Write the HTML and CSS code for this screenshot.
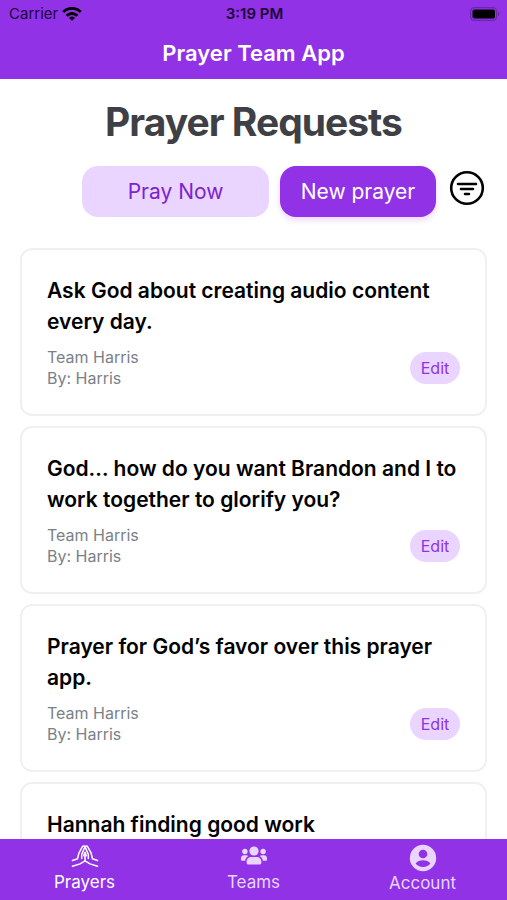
FILE: index.html
```html
<!DOCTYPE html>
<html lang="en">
<head>
  <meta charset="utf-8">
  <meta name="viewport" content="width=device-width, initial-scale=1">
  <title>Prayer Team App</title>
  <link rel="stylesheet" href="styles.css">
</head>
<body>
  <header>
    <div class="status-bar">
      <div class="carrier">
        <span>Carrier</span>
        <svg width="20" height="14" viewBox="0 0 20 14" fill="none" stroke="currentColor" stroke-width="2.9">
          <path d="M1.2 5a12.4 12.4 0 0 1 17.6 0"/>
          <path d="M4.600 8.700a7.600 7.600 0 0 1 10.800 0"/>
          <path d="M10 13.8l-3-3a4.200 4.200 0 0 1 6 0z" fill="currentColor" stroke="none"/>
        </svg>
      </div>
      <span class="time">3:19 PM</span>
      <div class="battery">
        <svg width="30" height="14" viewBox="0 0 30 14">
          <rect x=".6" y=".6" width="26" height="12.8" rx="4" fill="none" stroke="#6a27a8" stroke-width="1.2"/>
          <rect x="2.500" y="2.500" width="22.500" height="9" rx="2" fill="#000"/>
          <path d="M28 4.800q1.600.8 1.600 2.200T28 9.200z" fill="#6a27a8"/>
        </svg>
      </div>
    </div>
    <p class="app-title">Prayer Team App</p>
  </header>

  <main>
    <h1>Prayer Requests</h1>
    <div class="actions">
      <button class="btn btn-light">Pray Now</button>
      <button class="btn btn-dark">New prayer</button>
      <button class="filter" aria-label="Filter">
        <svg width="36" height="36" viewBox="0 0 36 36" fill="none" stroke="#000" stroke-width="2.6" stroke-linecap="round">
          <circle cx="18" cy="18" r="15.8"/>
          <path d="M9 14h18M12 19h12M16 24h4"/>
        </svg>
      </button>
    </div>

    <div class="cards">
      <article class="card">
        <h2>Ask God about creating audio content every day.</h2>
        <div class="card-info">
          <p>Team Harris<br>By: Harris</p>
          <button class="edit">Edit</button>
        </div>
      </article>
      <article class="card">
        <h2>God… how do you want Brandon and I to work together to glorify you?</h2>
        <div class="card-info">
          <p>Team Harris<br>By: Harris</p>
          <button class="edit">Edit</button>
        </div>
      </article>
      <article class="card">
        <h2>Prayer for God’s favor over this prayer app.</h2>
        <div class="card-info">
          <p>Team Harris<br>By: Harris</p>
          <button class="edit">Edit</button>
        </div>
      </article>
      <article class="card">
        <h2>Hannah finding good work</h2>
      </article>
    </div>
  </main>

  <nav>
    <a href="#prayers" class="active">
      <svg width="28" height="24" viewBox="0 0 28 24" fill="none" stroke="currentColor" stroke-width="1.5" stroke-linecap="round" stroke-linejoin="round">
        <path d="M1.500 16.500l5-1.700 1.500-6 3.300-6q1.200-1.600 2.700-.2 1.500-1.400 2.700.2l3.300 6 1.500 6 5 1.700"/>
        <path d="M1.500 22.200l7.500-2.300 5-3 5 3 7.500 2.300"/>
        <path d="M14 2.800l-3.300 7.600v4.200M14 2.800l3.300 7.600v4.200"/>
        <path d="M14 16.600v-4.400M12.700 11.500L14 8.300l1.300 3.200q-1.300 1.400-2.600 0z"/>
      </svg>
      <span>Prayers</span>
    </a>
    <a href="#teams">
      <svg width="28" height="24" viewBox="0 0 28 24" fill="currentColor">
        <circle cx="14" cy="7" r="4.600"/>
        <circle cx="4.900" cy="7.500" r="2.700"/>
        <circle cx="23.100" cy="7.500" r="2.700"/>
        <path d="M6.600 18.200c0-3.400 2.100-5.200 4.800-5.200h5.200c2.700 0 4.800 1.800 4.800 5.200 0 1.600-.8 2.300-2 2.300H8.600c-1.200 0-2-.7-2-2.300z"/>
        <path d="M1 14.200C1 12.300 2.300 11.300 4 11.300h2c1 0 1.600.3 2.200.8-1.800 1.100-2.800 2.500-3 4.600H2.300C1.500 16.700 1 16.200 1 15.400z"/>
        <path d="M27 14.200c0-1.900-1.300-2.900-3-2.900h-2c-1 0-1.600.3-2.200.8 1.800 1.100 2.800 2.500 3 4.600h2.900c.8 0 1.300-.5 1.300-1.300z"/>
      </svg>
      <span>Teams</span>
    </a>
    <a href="#account">
      <svg width="28" height="28" viewBox="0 0 28 28">
        <circle cx="14" cy="14" r="13.200" fill="currentColor"/>
        <circle cx="14" cy="10" r="4.300" fill="#9132e7"/>
        <path d="M6.600 19.500c1.600-2.400 4.300-3.300 7.400-3.300s5.800.9 7.400 3.300c-1.700 2.200-4.300 3.500-7.400 3.500s-5.700-1.300-7.400-3.500z" fill="#9132e7"/>
      </svg>
      <span>Account</span>
    </a>
  </nav>
</body>
</html>
```
FILE: styles.css
```css
* {
  box-sizing: border-box;
}
html, body {
  height: 100%;
}
body {
  margin: 0;
  display: flex;
  flex-direction: column;
  font-family: Inter, "Liberation Sans", sans-serif;
  background: #fff;
  color: #000;
}
h1, h2, p {
  margin: 0;
}
button {
  border: none;
  padding: 0;
  font-family: inherit;
  cursor: pointer;
}

/* header */
header {
  flex: none;
  background: #9132e7;
  padding-bottom: 10px;
}
.status-bar {
  display: grid;
  grid-template-columns: 1fr auto 1fr;
  align-items: center;
  height: 27px;
  padding: 0 7px 0 9px;
  font-size: 15px;
  color: #1d0636;
}
.carrier {
  display: flex;
  align-items: center;
  gap: 4px;
}
.carrier svg {
  color: #000;
}
.time {
  font-weight: 600;
}
.battery {
  display: flex;
  justify-content: flex-end;
}
.app-title {
  padding-top: 10px;
  font-size: 22px;
  line-height: 32px;
  font-weight: 600;
  text-align: center;
  color: #fff;
}

/* content */
main {
  flex: 1;
  min-height: 0;
  overflow: hidden;
  padding: 19px 20px 0;
}
h1 {
  font-size: 39px;
  line-height: 48px;
  text-align: center;
  letter-spacing: -1px;
  color: #3f3f46;
}
.actions {
  display: flex;
  justify-content: flex-end;
  align-items: center;
  gap: 11px;
  margin-top: 20px;
  padding-right: 2px;
}
.btn {
  height: 51px;
  border-radius: 16px;
  font-size: 21px;
  font-weight: 400;
}
.btn-light {
  width: 187px;
  background: #e9d5ff;
  color: #7e22ce;
}
.btn-dark {
  width: 156px;
  background: #9132e7;
  color: #fff;
  box-shadow: 0 3px 6px #ead6fb;
}
.filter {
  display: flex;
  margin: 0 0 8px 2px;
  background: none;
}
.cards {
  display: flex;
  flex-direction: column;
  gap: 10px;
  margin-top: 31px;
}
.card {
  padding: 25px;
  border: 2px solid #f0f0f1;
  border-radius: 12px;
}
.card h2 {
  font-size: 21px;
  line-height: 31px;
  font-weight: 600;
}
.card-info {
  display: flex;
  justify-content: space-between;
  align-items: flex-end;
  margin-top: 10px;
  font-size: 16px;
  line-height: 21px;
  color: #7b7f89;
}
.edit {
  width: 50px;
  height: 32px;
  margin-bottom: 5px;
  border-radius: 16px;
  background: #e9d5ff;
  font-size: 16px;
  color: #9132e7;
}

/* bottom tabs */
nav {
  flex: none;
  display: flex;
  height: 61px;
  padding-top: 5px;
  background: #9132e7;
}
nav a {
  flex: 1;
  display: flex;
  flex-direction: column;
  align-items: center;
  justify-content: space-between;
  padding-bottom: 7px;
  font-size: 17px;
  line-height: 22px;
  text-decoration: none;
  color: #e9d5ff;
}
nav a.active {
  color: #fff;
}
nav svg {
  flex: none;
}
```
